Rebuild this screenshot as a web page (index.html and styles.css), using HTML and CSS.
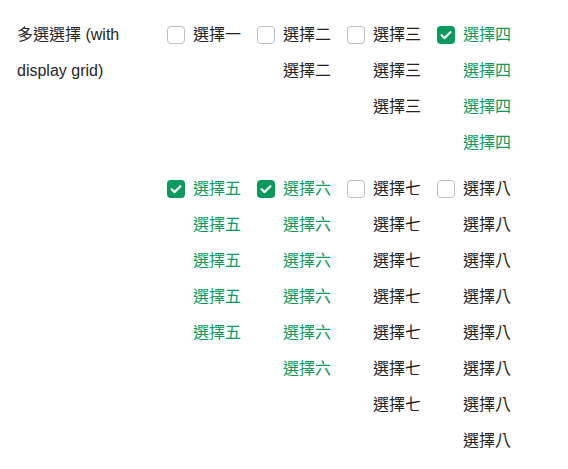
FILE: index.html
```html
<!DOCTYPE html>
<html lang="zh-Hant">
<head>
<meta charset="utf-8">
<link rel="stylesheet" href="styles.css">
</head>
<body>
<div class="field">
  <div class="field-label">多選選擇 (with display grid)</div>
  <div class="options">
    <label class="item"><span class="box"></span><span class="text"><span>選擇一</span></span></label>
    <label class="item"><span class="box"></span><span class="text"><span>選擇二</span><span>選擇二</span></span></label>
    <label class="item"><span class="box"></span><span class="text"><span>選擇三</span><span>選擇三</span><span>選擇三</span></span></label>
    <label class="item checked"><span class="box"><svg viewBox="0 0 18 18" width="18" height="18"><path d="M4.6 9.2 L7.6 12.1 L13.4 6.2" fill="none" stroke="#fff" stroke-width="2.2" stroke-linecap="round" stroke-linejoin="round"/></svg></span><span class="text"><span>選擇四</span><span>選擇四</span><span>選擇四</span><span>選擇四</span></span></label>
    <label class="item checked"><span class="box"><svg viewBox="0 0 18 18" width="18" height="18"><path d="M4.6 9.2 L7.6 12.1 L13.4 6.2" fill="none" stroke="#fff" stroke-width="2.2" stroke-linecap="round" stroke-linejoin="round"/></svg></span><span class="text"><span>選擇五</span><span>選擇五</span><span>選擇五</span><span>選擇五</span><span>選擇五</span></span></label>
    <label class="item checked"><span class="box"><svg viewBox="0 0 18 18" width="18" height="18"><path d="M4.6 9.2 L7.6 12.1 L13.4 6.2" fill="none" stroke="#fff" stroke-width="2.2" stroke-linecap="round" stroke-linejoin="round"/></svg></span><span class="text"><span>選擇六</span><span>選擇六</span><span>選擇六</span><span>選擇六</span><span>選擇六</span><span>選擇六</span></span></label>
    <label class="item"><span class="box"></span><span class="text"><span>選擇七</span><span>選擇七</span><span>選擇七</span><span>選擇七</span><span>選擇七</span><span>選擇七</span><span>選擇七</span></span></label>
    <label class="item"><span class="box"></span><span class="text"><span>選擇八</span><span>選擇八</span><span>選擇八</span><span>選擇八</span><span>選擇八</span><span>選擇八</span><span>選擇八</span><span>選擇八</span></span></label>
  </div>
</div>
</body>
</html>
```

FILE: styles.css
```css
html, body {
  margin: 0;
  background: #fff;
}
body {
  font-family: "Liberation Sans", "Noto Sans CJK TC", sans-serif;
  font-size: 16px;
  line-height: 36px;
  color: #222;
}
.field {
  display: flex;
  align-items: flex-start;
  padding: 17px 0 0 17px;
}
.field-label {
  width: 130px;
  margin-right: 20px;
  color: #262626;
}
.options {
  display: grid;
  grid-template-columns: repeat(4, 82px);
  column-gap: 8px;
  row-gap: 10px;
}
.item {
  display: flex;
  align-items: flex-start;
  gap: 8px;
}
.box {
  flex: none;
  width: 18px;
  height: 18px;
  margin-top: 9px;
  box-sizing: border-box;
  border: 1px solid #b9bfc7;
  border-radius: 4px;
  background: #fff;
}
.box svg {
  display: block;
}
.checked .box {
  border: none;
  background: #0a9a5c;
}
.text {
  display: flex;
  flex-direction: column;
}
.checked .text {
  color: #0a9a5c;
}
```
